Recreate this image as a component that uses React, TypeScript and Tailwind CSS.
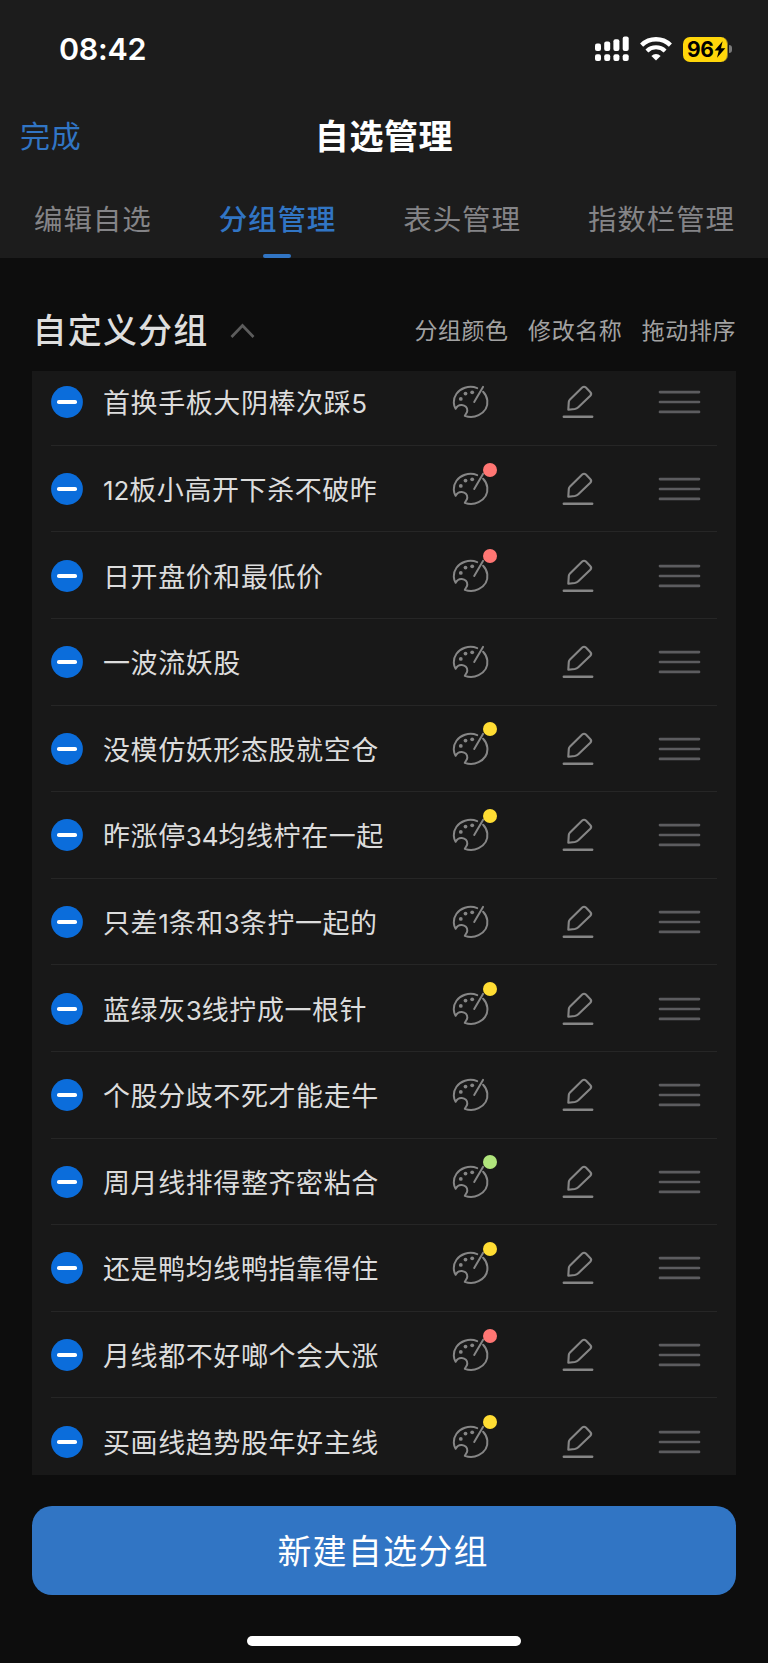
type Group = { name: string; dot?: 'red' | 'yellow' | 'green' };

const groups: Group[] = [
  { name: '首换手板大阴棒次踩5' },
  { name: '12板小高开下杀不破昨', dot: 'red' },
  { name: '日开盘价和最低价', dot: 'red' },
  { name: '一波流妖股' },
  { name: '没模仿妖形态股就空仓', dot: 'yellow' },
  { name: '昨涨停34均线柠在一起', dot: 'yellow' },
  { name: '只差1条和3条拧一起的' },
  { name: '蓝绿灰3线拧成一根针', dot: 'yellow' },
  { name: '个股分歧不死才能走牛' },
  { name: '周月线排得整齐密粘合', dot: 'green' },
  { name: '还是鸭均线鸭指靠得住', dot: 'yellow' },
  { name: '月线都不好啷个会大涨', dot: 'red' },
  { name: '买画线趋势股年好主线', dot: 'yellow' },
];

const dotColors = {
  red: 'bg-[#ff7673]',
  yellow: 'bg-[#ffdd33]',
  green: 'bg-[#b0e57c]',
};

function GroupName({ name }: { name: string }) {
  return (
    <span className="flex-1 whitespace-nowrap pt-[4px] text-[27px] leading-[40px] tracking-[0.58px] text-[#dcdcdc]">
      {name.split(/(\d+)/).map((part, i) =>
        /\d/.test(part) ? (
          <span key={i} className="font-['Inter'] text-[26px] tracking-[-0.1px]">{part}</span>
        ) : (
          part
        ),
      )}
    </span>
  );
}

function SignalIcon() {
  return (
    <svg className="h-[26px] w-[34px]" viewBox="0 0 34 26" fill="#fff">
      <rect x="0" y="7.5" width="6" height="7.5" rx="2" />
      <rect x="9.2" y="5.5" width="6" height="9.5" rx="2" />
      <rect x="18.4" y="3.2" width="6" height="11.8" rx="2" />
      <rect x="27.7" y="0.5" width="6" height="14.5" rx="2" />
      <rect x="0" y="18.3" width="6" height="6.6" rx="2" />
      <rect x="9.2" y="18.3" width="6" height="6.6" rx="2" />
      <rect x="18.4" y="18.3" width="6" height="6.6" rx="2" />
      <rect x="27.7" y="18.3" width="6" height="6.6" rx="2" />
    </svg>
  );
}

function WifiIcon() {
  return (
    <svg className="h-[24px] w-[32px]" viewBox="0 0 32 24" fill="none" stroke="#fff">
      <path d="M1.6 8.1a20.8 20.8 0 0 1 28.8 0" strokeWidth="4.4" />
      <path d="M6.9 13.9a13.2 13.2 0 0 1 18.2 0" strokeWidth="4.1" />
      <path d="M16 23.5l-4.6-4.6a6.6 6.6 0 0 1 9.2 0z" fill="#fff" stroke="none" />
    </svg>
  );
}

function Battery() {
  return (
    <div className="flex items-center">
      <div className="flex h-[25px] w-[45px] items-center rounded-[7px] border-r border-[#8b7a2c] bg-[#ffd60a] pl-[4px]">
        <span className="font-['Inter'] text-[21px] font-bold leading-none tracking-[-0.4px] text-black">96</span>
        <svg className="ml-[0.5px] h-[17px] w-[12px]" viewBox="0 0 12 17" fill="#000">
          <path d="M8.6 0.3L0.6 9.4h4.2L3 16.7l8.3-9.4H7z" />
        </svg>
      </div>
      <div className="ml-px h-[8px] w-[3px] rounded-r-full bg-[#7a7a7a]" />
    </div>
  );
}

function PaletteIcon() {
  return (
    <svg className="h-[36px] w-[40px]" viewBox="0 0 40 36" fill="none" stroke="#868686" strokeWidth="2" strokeLinecap="round" strokeLinejoin="round">
      <path d="M26.2 4.200C22.800 2.800 18.200 2.400 13.900 3.800 6.500 6.200 2.600 12.400 2.800 18.600c.1 2.500.7 4.400 1.800 6.200 1.200-2.600 3.600-4.100 6.300-3.900 3.300.3 5.500 2.700 5.400 5.700-.1 2.100-1.600 3.100-2.500 5.300 4.400 1.600 9.500 1.500 13.800-.7 6.100-3.100 9.400-8.800 8.700-14.800-.4-3.300-1.700-6.100-4.200-8.600" />
      <path d="M32 2.900L23.200 18" />
      <g fill="#868686" stroke="none">
        <circle cx="9.800" cy="14.900" r="1.900" />
        <circle cx="14.500" cy="9.600" r="1.900" />
        <circle cx="21.200" cy="8.300" r="1.900" />
      </g>
    </svg>
  );
}

function EditIcon() {
  return (
    <svg className="h-[36px] w-[32px]" viewBox="0 0 32 36" fill="none" stroke="#868686" strokeWidth="2.100" strokeLinecap="round" strokeLinejoin="round">
      <path d="M6.300 25.700l.5-7.800c.1-1 .5-1.800 1.200-2.500L20.200 3.600c1.300-1.200 2.400-1.200 3.700 0l4.300 4.300c1.300 1.300 1.300 2.500.1 3.800L16.300 23.200c-1 1-2.300 1.600-3.600 1.800z" />
      <path d="M1.800 32.700h28.400" strokeWidth="2.400" />
    </svg>
  );
}

function DragIcon() {
  return (
    <svg className="h-[24px] w-[43px]" viewBox="0 0 43 24" fill="none" stroke="#5c5c5f" strokeWidth="2.700" strokeLinecap="round">
      <path d="M2 2.100h39M2 12h39M2 21.900h39" />
    </svg>
  );
}

function GroupRow({ group }: { group: Group }) {
  return (
    <div className="mx-[19px] flex h-[86.620px] shrink-0 items-center border-b border-[#262626] pt-px">
      <svg className="mr-[20px] size-[32px] shrink-0" viewBox="0 0 32 32">
        <circle cx="16" cy="16" r="15.900" fill="#0b6ddb" />
        <rect x="6" y="13.900" width="20" height="4.200" rx="1.800" fill="#fff" />
      </svg>
      <GroupName name={group.name} />
      <div className="relative mr-[71px]">
        <PaletteIcon />
        {group.dot && (
          <span className={`absolute -top-[8.500px] left-[32.500px] size-[14px] rounded-full ${dotColors[group.dot]}`} />
        )}
      </div>
      <div className="mr-[64px]">
        <EditIcon />
      </div>
      <div className="mr-[16.500px]">
        <DragIcon />
      </div>
    </div>
  );
}

export default function App() {
  return (
    <div className="flex h-[1663px] w-[768px] flex-col overflow-hidden bg-[#0d0d0d] font-['Inter','Noto_Sans_CJK_SC',sans-serif]">
      <header className="h-[258px] shrink-0 bg-[#1c1c1c]">
        <div className="flex h-[98px] items-center justify-between pl-[59px] pr-[36px]">
          <span className="text-[30.500px] font-semibold leading-none tracking-[-0.300px] text-white">08:42</span>
          <div className="flex items-center">
            <SignalIcon />
            <div className="ml-[11px] mr-[11px]">
              <WifiIcon />
            </div>
            <Battery />
          </div>
        </div>
        <div className="grid h-[78px] grid-cols-[1fr_auto_1fr] items-center">
          <button className="pb-[2px] pl-[20px] text-left text-[30px] leading-none tracking-[0.800px] text-[#3175c4]">完成</button>
          <h1 className="text-[34px] font-bold leading-none tracking-[0.600px] text-white">自选管理</h1>
        </div>
        <nav className="flex h-[82px] justify-between pl-[34px] pr-[33px] text-[28.500px] leading-[88px] tracking-[0.900px] text-[#848487]">
          <span>编辑自选</span>
          <span className="relative font-medium text-[#3175c4]">
            分组管理
            <span className="absolute left-1/2 top-[78px] h-[4px] w-[28px] -translate-x-1/2 rounded-full bg-[#3175c4]" />
          </span>
          <span>表头管理</span>
          <span>指数栏管理</span>
        </nav>
      </header>

      <main className="flex flex-col px-[32px]">
        <div className="flex h-[112.600px] items-center">
          <h2 className="pl-[0.500px] pt-[33px] text-[34px] font-medium leading-none tracking-[1.200px] text-[#dedede]">自定义分组</h2>
          <svg className="ml-[21px] mt-[33px] h-[16px] w-[25px]" viewBox="0 0 25 16" fill="none" stroke="#5c5c5c" strokeWidth="2.700">
            <path d="M1.500 14L12.500 2.500 23.500 14" />
          </svg>
          <div className="ml-auto flex gap-[19.500px] pt-[34px] text-[23px] leading-none tracking-[0.550px] text-[#a2a2a2]">
            <span>分组颜色</span>
            <span>修改名称</span>
            <span>拖动排序</span>
          </div>
        </div>
        <div className="flex h-[1104px] flex-col overflow-hidden bg-[#181818]">
          <div className="-mt-[11.500px] flex shrink-0 flex-col">
            {groups.map((group) => (
              <GroupRow key={group.name} group={group} />
            ))}
          </div>
        </div>
        <button className="mt-[31.500px] h-[88.500px] rounded-[20px] bg-[#3175c4] pr-[2px] pt-[4px] text-[34px] leading-none tracking-[1.200px] text-white">新建自选分组</button>
      </main>
      <div className="mx-auto mt-[41.500px] h-[10px] w-[274px] shrink-0 rounded-full bg-white" />
    </div>
  );
}
